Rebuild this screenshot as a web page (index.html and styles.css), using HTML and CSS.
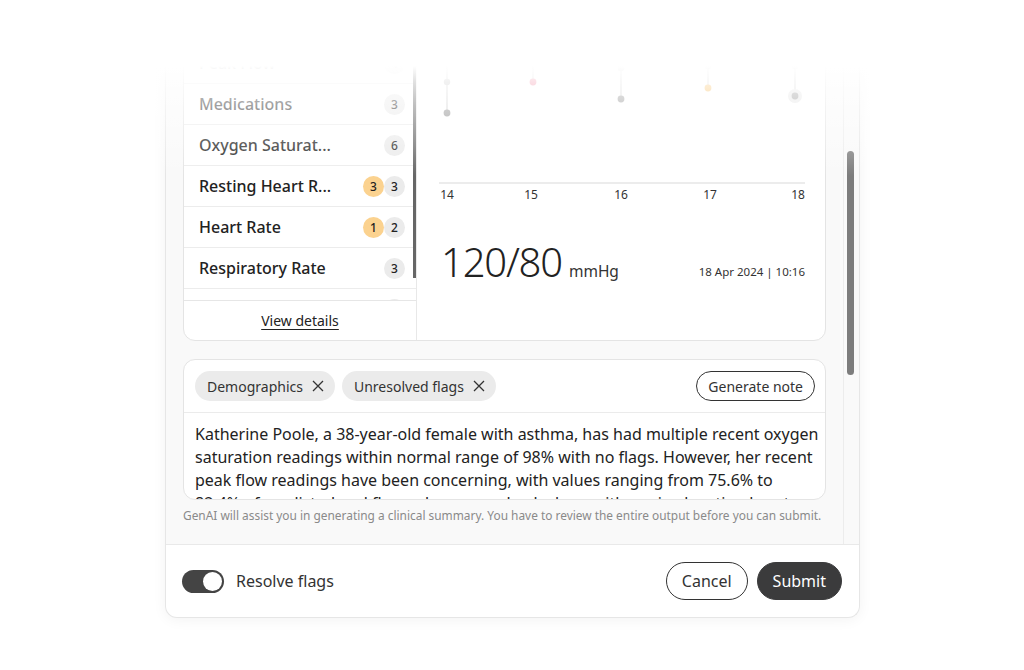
FILE: index.html
```html
<!DOCTYPE html>
<html lang="en">
<head>
<meta charset="utf-8">
<title>Clinical summary</title>
<link rel="stylesheet" href="styles.css">
</head>
<body>
<div class="page">
  <div class="modal">
    <div class="scroll-area">
      <div class="scroll-content">
        <div class="data-card">
          <div class="list-col">
            <div class="list-viewport">
              <div class="row"><span class="row-label">Blood Pressure</span><span class="badges"><span class="badge">5</span></span></div>
              <div class="row"><span class="row-label">Peak Flow</span><span class="badges"><span class="badge">4</span></span></div>
              <div class="row"><span class="row-label">Medications</span><span class="badges"><span class="badge">3</span></span></div>
              <div class="row"><span class="row-label">Oxygen Saturat...</span><span class="badges"><span class="badge">6</span></span></div>
              <div class="row"><span class="row-label">Resting Heart R...</span><span class="badges"><span class="badge flag">3</span><span class="badge">3</span></span></div>
              <div class="row"><span class="row-label">Heart Rate</span><span class="badges"><span class="badge flag">1</span><span class="badge">2</span></span></div>
              <div class="row"><span class="row-label">Respiratory Rate</span><span class="badges"><span class="badge">3</span></span></div>
              <div class="row"><span class="row-label">Temperature</span><span class="badges"><span class="badge">2</span></span></div>
              <div class="list-thumb"></div>
            </div>
            <div class="list-footer"><a class="view-link" href="#">View details</a></div>
          </div>
          <div class="chart-col">
            <svg class="chart" width="408" height="232" viewBox="0 0 408 232">
              <g class="stems">
                <line x1="30" y1="64" x2="30" y2="111"/>
                <line x1="116" y1="58" x2="116" y2="80"/>
                <line x1="204" y1="58" x2="204" y2="97"/>
                <line x1="291" y1="58" x2="291" y2="86"/>
                <line x1="378" y1="58" x2="378" y2="94"/>
              </g>
              <circle cx="30" cy="80" r="3.2" class="dot-light"/>
              <circle cx="30" cy="111" r="3.4" class="dot"/>
              <circle cx="116" cy="80" r="3.4" class="dot-pink"/>
              <circle cx="204" cy="66" r="3.2" class="dot-light"/>
              <circle cx="204" cy="97" r="3.4" class="dot"/>
              <circle cx="291" cy="64" r="3.2" class="dot-light"/>
              <circle cx="291" cy="86" r="3.4" class="dot-orange"/>
              <circle cx="378" cy="64" r="3.2" class="dot-light"/>
              <circle cx="378" cy="94" r="7" class="halo"/>
              <circle cx="378" cy="94" r="3.4" class="dot"/>
              <line x1="22" y1="181" x2="388" y2="181" class="axis"/>
              <g class="ticks">
                <text x="30" y="197">14</text>
                <text x="114" y="197">15</text>
                <text x="204" y="197">16</text>
                <text x="293" y="197">17</text>
                <text x="381" y="197">18</text>
              </g>
            </svg>
            <div class="reading">
              <div class="reading-value"><span class="big">120/80</span><span class="unit">mmHg</span></div>
              <div class="reading-date">18 Apr 2024 | 10:16</div>
            </div>
          </div>
        </div>

        <div class="note-card">
          <div class="chip-row">
            <div class="chips">
              <span class="chip">Demographics <svg class="x" width="12" height="12" viewBox="0 0 12 12"><path d="M1 1L11 11M11 1L1 11"/></svg></span>
              <span class="chip">Unresolved flags <svg class="x" width="12" height="12" viewBox="0 0 12 12"><path d="M1 1L11 11M11 1L1 11"/></svg></span>
            </div>
            <button class="btn-outline small">Generate note</button>
          </div>
          <div class="note-text">
            <p>Katherine Poole, a 38-year-old female with asthma, has had multiple recent oxygen saturation readings within normal range of 98% with no flags. However, her recent peak flow readings have been concerning, with values ranging from 75.6% to 82.4% of predicted and flagged as unresolved, along with a raised resting heart rate.</p>
          </div>
        </div>
        <p class="helper">GenAI will assist you in generating a clinical summary. You have to review the entire output before you can submit.</p>
      </div>
      <div class="scroll-track"><div class="scroll-thumb"></div></div>
    </div>
    <div class="modal-footer">
      <label class="toggle-wrap">
        <span class="toggle"><span class="knob"></span></span>
        <span class="toggle-label">Resolve flags</span>
      </label>
      <div class="actions">
        <button class="btn-outline">Cancel</button>
        <button class="btn-dark">Submit</button>
      </div>
    </div>
  </div>
  <div class="top-fade"></div>
</div>
</body>
</html>
```
FILE: styles.css
```css
* { box-sizing: border-box; }
html, body { margin: 0; padding: 0; background: #fff; }
body {
  font-family: "Noto Sans", "Open Sans", sans-serif;
  color: #222;
  width: 1024px;
  height: 670px;
  overflow: hidden;
}
.page {
  position: relative;
  padding-left: 165px;
}
.modal {
  width: 695px;
  border: 1px solid #e6e6e6;
  border-top: none;
  border-radius: 0 0 12px 12px;
  background: #fff;
  box-shadow: 0 2px 14px rgba(0,0,0,0.05);
  overflow: hidden;
}
.scroll-area {
  display: flex;
  height: 545px;
  background: #f9f9f9;
  border-bottom: 1px solid #e9e9e9;
}
.scroll-content {
  flex: 1;
  padding: 1px 17px 0;
  overflow: hidden;
}
.scroll-track {
  width: 16px;
  border-left: 1px solid #ececec;
  padding: 151px 0 0 3px;
}
.scroll-thumb {
  width: 7px;
  height: 224px;
  border-radius: 4px;
  background: #7c7c7c;
}

/* data card */
.data-card {
  display: flex;
  background: #fff;
  border: 1px solid #e4e4e4;
  border-radius: 12px;
  overflow: hidden;
}
.list-col {
  width: 233px;
  border-right: 1px solid #e8e8e8;
  display: flex;
  flex-direction: column;
}
.list-viewport {
  position: relative;
  height: 298px;
  overflow: hidden;
}
.row {
  height: 41px;
  border-bottom: 1px solid #ececec;
  display: flex;
  align-items: center;
  justify-content: space-between;
  padding: 0 11px 0 15px;
}
.row-label {
  font-size: 16px;
  font-weight: 500;
  color: #222;
  white-space: nowrap;
}
.badges { display: flex; }
.badge {
  width: 21px;
  height: 21px;
  border-radius: 50%;
  background: #ebebeb;
  font-size: 12px;
  font-weight: 500;
  color: #222;
  display: flex;
  align-items: center;
  justify-content: center;
}
.badge.flag { background: #fbd28f; }
.list-thumb {
  position: absolute;
  right: 0;
  top: 0;
  width: 3px;
  height: 276px;
  background: #666;
}
.list-footer {
  border-top: 1px solid #e6e6e6;
  height: 40px;
  display: flex;
  align-items: center;
  justify-content: center;
}
.view-link {
  font-size: 14px;
  color: #222;
  text-decoration: underline;
  text-underline-offset: 3px;
}

.chart-col {
  flex: 1;
  display: flex;
  flex-direction: column;
}
.chart { display: block; }
.stems line { stroke: #c6c6c6; stroke-width: 1.2; }
.dot { fill: #8f8f8f; }
.dot-light { fill: #bdbdbd; }
.dot-pink { fill: #ec6a88; }
.dot-orange { fill: #f6b347; }
.halo { fill: #e4e4e4; }
.axis { stroke: #e6e6e6; stroke-width: 1.5; }
.ticks text {
  font-family: "Noto Sans", sans-serif;
  font-size: 12px;
  fill: #333;
  text-anchor: middle;
}
.reading {
  display: flex;
  align-items: baseline;
  justify-content: space-between;
  padding: 2px 20px 0 24px;
  line-height: 52px;
}
.reading-value { display: flex; align-items: baseline; gap: 7px; }
.big {
  font-size: 40px;
  font-weight: 300;
  color: #222;
  letter-spacing: -1.2px;
}
.unit { font-size: 15.5px; color: #333; }
.reading-date { font-size: 11.5px; color: #333; position: relative; top: -1px; }

/* note card */
.note-card {
  margin-top: 18px;
  background: #fff;
  border: 1px solid #e4e4e4;
  border-radius: 12px;
  overflow: hidden;
}
.chip-row {
  display: flex;
  align-items: center;
  justify-content: space-between;
  padding: 11px 10px 11px 11px;
  border-bottom: 1px solid #ebebeb;
}
.chips { display: flex; gap: 7px; }
.chip {
  height: 30px;
  border-radius: 15px;
  background: #ebebeb;
  padding: 0 11px 0 12px;
  display: inline-flex;
  align-items: center;
  gap: 9px;
  font-size: 14px;
  color: #333;
}
.chip .x path { stroke: #333; stroke-width: 1.3; fill: none; }
.btn-outline, .btn-dark {
  font-family: inherit;
  border-radius: 19px;
  height: 38px;
  font-size: 16px;
  padding: 0 15px;
  cursor: pointer;
}
.btn-outline {
  background: #fff;
  border: 1px solid #333;
  color: #333;
}
.btn-outline.small {
  height: 30px;
  border-radius: 15px;
  font-size: 14px;
  padding: 0 11px;
}
.btn-dark {
  background: #3b3b3c;
  border: 1px solid #3b3b3c;
  color: #fff;
}
.note-text {
  height: 86px;
  overflow: hidden;
  padding: 10px 4px 0 11px;
}
.note-text p {
  margin: 0;
  font-size: 16px;
  line-height: 23px;
  color: #222;
}
.helper {
  margin: 7px 0 0;
  font-size: 11.9px;
  line-height: 16px;
  color: #8a8a8a;
  white-space: nowrap;
}

/* footer */
.modal-footer {
  height: 72px;
  display: flex;
  align-items: center;
  justify-content: space-between;
  padding: 0 17px 0 16px;
}
.toggle-wrap { display: flex; align-items: center; gap: 12px; }
.toggle {
  width: 42px;
  height: 23px;
  border-radius: 12px;
  background: #444;
  padding: 2px;
  display: flex;
  justify-content: flex-end;
}
.knob {
  width: 19px;
  height: 19px;
  border-radius: 50%;
  background: #fff;
}
.toggle-label { font-size: 16px; color: #333; }
.actions { display: flex; gap: 9px; }

.top-fade {
  position: absolute;
  left: 0;
  top: 0;
  width: 1024px;
  height: 176px;
  pointer-events: none;
  background: linear-gradient(to bottom,
    #fff 0px,
    #fff 66px,
    rgba(255,255,255,0.8) 82px,
    rgba(255,255,255,0.58) 105px,
    rgba(255,255,255,0.28) 145px,
    rgba(255,255,255,0) 176px);
}
```
